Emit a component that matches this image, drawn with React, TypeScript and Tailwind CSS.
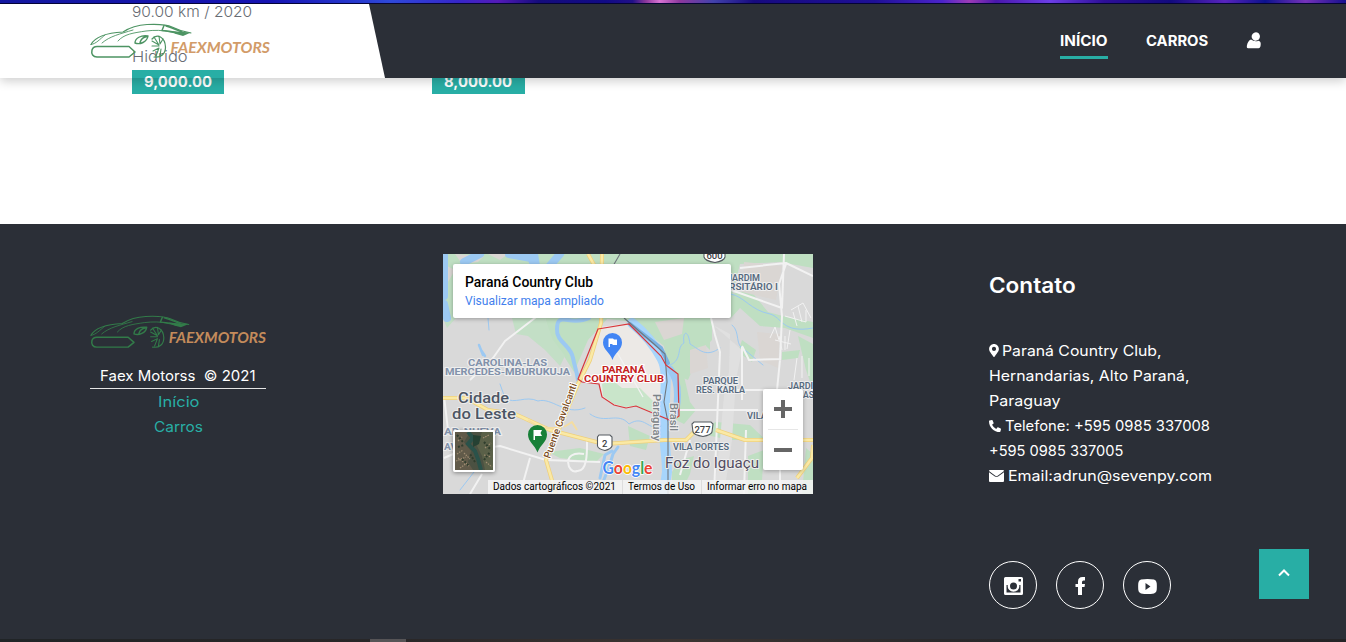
import { useLayoutEffect, useRef, useState } from "react";
import type { ReactNode } from "react";
import { FaMapMarkerAlt, FaPhoneAlt } from "react-icons/fa";

/* Widens or narrows a line of text so that it fills a fixed measure. */
function Fit({ width, className = "", children }: { width: number; className?: string; children: string }) {
  const ref = useRef<HTMLSpanElement>(null);
  const [scale, setScale] = useState(1);
  useLayoutEffect(() => {
    if (ref.current) setScale(width / ref.current.offsetWidth);
  }, [width, children]);
  return (
    <span className={`flex justify-start whitespace-pre ${className}`} style={{ width }}>
      <span ref={ref} className="block shrink-0 origin-left" style={{ transform: `scaleX(${scale})` }}>
        {children}
      </span>
    </span>
  );
}

function Logo({ className, green, orange }: { className: string; green: string; orange: string }) {
  return (
    <svg className={className} viewBox="0 0 180 36" fill="none" stroke={green} strokeLinecap="round" strokeLinejoin="round" preserveAspectRatio="none">
      <path d="M1 21.500C5 14 14 10 33 9C39 5 46 2 57 1.500C68 1 77 1.500 82 4C88 7 94 9 101 10" strokeWidth="1.1" />
      <path d="M1 21.500C6 21 10 16 15 12M12 20C20 13 30 11 43 7M28 18C34 11 43 10 56 8C64 7 73 7 80 9L91 11" strokeWidth=".9" />
      <path d="M74 2.500L72 7.500C78 7.500 83 9 88 10M76 3C82 4.500 86 7 92 9" strokeWidth="1.500" />
      <path d="M80 8L101 9.500L93 13L86 11Z" fill={green} stroke="none" />
      <path d="M7 23.500H39L45 29L39 34H7C3 34 1 31 2 27Q3 23.500 7 23.500Z" strokeWidth="1.5" />
      <path d="M45 20C45 15 51 12 58 13C57 19 50 22 45 20ZM50 19.500C51 16 54 14 57 13.500" strokeWidth="1.4" />
      <path d="M62 16C67 10 75 14 75.500 24C75.500 31 71 35 64 34" strokeWidth="1.2" />
      <path d="M62 18L69 22L64 14M69 13L70 21L73 16M62 23L69 23M63 28L69 25L66 33M71 26L70 33" strokeWidth="1.1" />
      <text x="80.5" y="30" fill={orange} stroke="none" fontFamily="Lato, 'Open Sans', sans-serif" fontSize="15" fontWeight="700" fontStyle="italic" textLength="99.5" lengthAdjust="spacingAndGlyphs">FAEXMOTORS</text>
    </svg>
  );
}

function Label({ x, y, w, size, fill, halo = "#eeeeee", weight = 500, children }: { x: number; y: number; w?: number; size: number; fill: string; halo?: string; weight?: number; children: string }) {
  return (
    <text x={x} y={y} fontSize={size} fontWeight={weight} fill={fill} stroke={halo} strokeWidth="2" paintOrder="stroke" strokeLinejoin="round" textLength={w} lengthAdjust="spacingAndGlyphs">
      {children}
    </text>
  );
}

function MapDrawing() {
  return (
    <svg className="block h-[240px] w-[370px]" viewBox="443 254 370 240" fontFamily="Roboto, sans-serif" fill="none">
      <rect x="443" y="254" width="370" height="240" fill="#d9d9d9" />
      {/* parks and green belts */}
      <g fill="#bfdfc2">
        <path d="M443 254H600L608 318L588 340L574 372L560 350L548 338L545 318H443Z" />
        <path d="M600 318H712V340L700 352L688 380L668 372L664 346L633 322Z" />
        <path d="M600 254H813V268L780 262L740 264L731 300H600Z" />
        <path d="M731 294L750 290L768 312L790 318L813 322V338L785 328L760 326L740 308L731 318L710 318V350L700 340V318Z" />
        <path d="M668 350L690 345L688 362L684 376L690 402L696 410L684 424L676 420V376Z" />
        <path d="M692 432L716 422L750 425L766 440L730 440Z" />
        <path d="M548 452L580 448L604 454L596 462L560 458Z" />
        <path d="M628 426L650 436L646 450L630 446ZM680 460L694 456L690 474L680 494H672V472Z" />
        <path d="M742 340L756 350L752 362L738 352ZM782 352L800 350L798 358L782 360ZM798 336L813 344V390L806 370ZM760 270L772 274L764 288Z" />
        <path d="M748 456L764 450L762 480L756 494H748ZM806 448L813 454V494H802Z" />
      </g>
      <g fill="#dad6d3">
        <path d="M455 254L484 256L478 262L462 264ZM443 264L455 270L448 282L443 280ZM488 254H508L500 260Z" />
        <path d="M655 322L684 318L682 334L664 340ZM690 350L706 345L708 368L690 374ZM744 262L782 266L776 300L742 292Z" />
        <path d="M757 332L780 334L778 368L760 360Z" />
      </g>
      <path d="M443 318H545L552 342L564 360L572 384H443Z" fill="#d9d9d9" />
      <path d="M443 318H456L447 328ZM512 318H545L553 340L565 356L560 366L545 350L528 336L516 334Z" fill="#c3dfc6" />
      <path d="M600 327L632 323L650 346L660 366L664 418L636 406L626 408L614 405L602 397L599 384L582 381L590 360Z" fill="#ece9e6" />
      <path d="M602 384L612 380L622 388L640 388L656 404L658 414L636 406L625 407L614 404L603 396ZM618 369L634 372L630 378L618 378Z" fill="#c9e5ca" />
      <path d="M713 325L730 334L729 372L724 396L720 440L714 494H724L732 440L736 380L742 350Z" fill="#e0e0e0" />
      {/* water */}
      <g stroke="#9cc9f2" strokeLinecap="round" strokeLinejoin="round">
        <path d="M444 254V296M464 262L480 254M447 318L444 304M509 254L531 258L534 264M534 254L536 266M548 268L560 254" strokeWidth="8" />
        <path d="M481 350L485 356M479 345L483 355" strokeWidth="2.5" />
        <path d="M589 318C570 327 557 310 557 329C556 342 571 345 573 358C575 368 577 372 578 380" strokeWidth="4" />
        <path d="M632 323C646 334 655 346 662 359C669 373 664 392 665 410C661 430 667 450 667 472C665 485 664 494 663 500" strokeWidth="10" stroke="#a7d5fc" />
        <path d="M630 324L661 348L668 363" stroke="#79b1e2" strokeWidth="4" />
        <path d="M670 369C681 383 678 408 673 418" strokeWidth="7" />
        <path d="M618 447L613 454L609 467L603 482M612 451L605 455L600 478" strokeWidth="3" />
        <path d="M488 318L489 330M460 490L474 472M500 384L505 398C515 405 525 395 538 401C552 397 565 416 585 408M590 414C605 425 618 411 629 424C645 414 648 432 661 426M731 294C745 297 750 310 770 314C782 317 782 334 813 328M732 325C741 332 734 346 745 350L763 365M670 365C683 360 676 347 684 343C682 332 688 328 690 344C700 350 706 358 720 348" strokeWidth="1" />
      </g>
      {/* minor roads */}
      <g stroke="#f2f2f2" strokeWidth="2" strokeLinejoin="round">
        <path d="M540 314L505 341L493 358L470 380M444 458L458 452L500 446L546 460L600 462M530 458L520 494M482 474L470 494M546 460L556 438L570 394M731 290L782 308L784 254M740 268L786 263L813 276M786 264L779 284L782 316L780 360L775 410M711 318L715 335L720 352L718 400L714 494M742 346L749 360L781 359M742 347V400M690 440L680 475M746 430L744 494M780 440V494M722 390H780M680 410H758M444 396L448 430M584 454C560 450 568 475 577 471C588 472 587 450 587 440" />
        <path d="M791 310L803 303L811 318M785 316L806 322M793 312L797 326M798 306L802 322M806 310V322M775 340L791 344M779 336L782 350M785 336V350M790 330L787 349M797 358L794 380M802 356V378M809 358V376M770 338L775 327L779 340" strokeWidth="1" />
        <path d="M603 342L618 354L626 368L635 383L643 397" strokeWidth="1.3" />
      </g>
      {/* highways */}
      <g strokeLinejoin="round">
        <path d="M443 398H466L488 410L515 414L550 430L604 444L665 440L686 440L694 432M716 430L745 440H813M602 254L601 323L590 360L578 384L546 460L556 494M588 254L598 272M797 478L812 458L813 445" stroke="#efd07c" strokeWidth="4" />
        <path d="M443 398H466L488 410L515 414L550 430L604 444L665 440L686 440L694 432M716 430L745 440H813M602 254L601 323L590 360L578 384L546 460L556 494M588 254L598 272M797 478L812 458L813 445" stroke="#fae9a5" strokeWidth="2.5" />
        <path d="M564 427L572 422L577 430M528 420L540 428L560 428" stroke="#f4dda0" strokeWidth="2" />
      </g>
      {/* border lines */}
      <path d="M620 254L613 266M624 318L654 344L665 354L667 382L664 402L668 422V494" stroke="#70777e" strokeWidth="1.1" />
      <path d="M598 329L629 324L661 356L666 365L678 374L679 416L672 421L636 406L626 408L614 405L602 397L599 384L582 382L578 379Z" stroke="#d8363b" strokeWidth="1.2" />
      {/* place names */}
      <Label x={468} y={366} w={79} size={8.5} fill="#8191aa" weight={700}>CAROLINA-LAS</Label>
      <Label x={445} y={375} w={125} size={8.5} fill="#8191aa" weight={700}>MERCEDES-MBURUKUJA</Label>
      <Label x={444} y={435} w={57} size={8.5} fill="#8191aa" weight={700}>AD-NUEVA</Label>
      <Label x={444} y={450} w={13} size={8.5} fill="#8191aa" weight={700}>AV</Label>
      <Label x={458} y={403} w={51} size={15.5} fill="#4c5564">Cidade</Label>
      <Label x={452} y={419} w={64} size={15.5} fill="#4c5564">do Leste</Label>
      <Label x={665} y={467.5} w={94} size={15} fill="#534c60" weight={450}>Foz do Iguaçu</Label>
      <Label x={602} y={373} w={43} size={9} fill="#c5221f" halo="#fff" weight={700}>PARANÁ</Label>
      <Label x={584} y={382} w={80} size={9} fill="#c5221f" halo="#fff" weight={700}>COUNTRY CLUB</Label>
      <Label x={727} y={281} w={33} size={8.5} fill="#566a7f" weight={600}>JARDIM</Label>
      <Label x={717} y={290} w={61} size={8.5} fill="#566a7f" weight={600}>VERSITÁRIO I</Label>
      <Label x={703} y={384} w={35} size={8.5} fill="#566a7f" weight={600}>PARQUE</Label>
      <Label x={696} y={393} w={49} size={8.5} fill="#566a7f" weight={600}>RES. KARLA</Label>
      <Label x={788} y={389} w={33} size={8.5} fill="#566a7f" weight={600}>JARDIM</Label>
      <Label x={803} y={398} size={8.5} fill="#566a7f" weight={600}>AS</Label>
      <Label x={747} y={419} w={20} size={8.5} fill="#566a7f" weight={600}>VILA</Label>
      <Label x={673} y={450} w={56} size={8.5} fill="#566a7f" weight={600}>VILA PORTES</Label>
      <g transform="translate(550 459) rotate(-70)"><Label x={0} y={0} w={79} size={10} fill="#7b4d22" halo="#fff">Puente Cavalcanti</Label></g>
      <g transform="translate(653 394) rotate(90)"><Label x={0} y={0} w={47} size={10.5} fill="#7d8388">Paraguay</Label></g>
      <g transform="translate(670 403) rotate(90)"><Label x={0} y={0} w={28} size={10.5} fill="#7d8388">Brasil</Label></g>
      {/* road shields */}
      <g fill="#fff" stroke="#555b61" strokeWidth="1.1">
        <path d="M599 435H610L612 437V446Q611 449 605 450.500Q598 449 597.500 446V437Z" />
        <path d="M694 422H711L713 424L712 432Q711 435 703 436.500Q694 435 693 432L692 424Z" />
        <path d="M704 250H725V257Q724 261 715 262.500Q705 261 704 257Z" />
      </g>
      <g fill="#3c4043" fontSize="9.5" fontWeight="500" textAnchor="middle">
        <text x="604.700" y="446.500">2</text><text x="702.500" y="432.500">277</text><text x="714.500" y="258.500">600</text>
      </g>
      {/* pins */}
      <path d="M612.500 360C610 352 603 350 603 342.500A9.500 9.500 0 0 1 622 342.500C622 350 615 352 612.500 360Z" fill="#4285f4" />
      <path d="M608.500 347V338.500H613L614 339.500H617V345H613L612 344H610V347Z" fill="#fff" />
      <path d="M537.500 452.500C535 445 528 442 528 434.500A9.500 9.500 0 0 1 547 434.500C547 442 540 445 537.500 452.500Z" fill="#188038" />
      <path d="M533.500 440V430H542L540.500 433L542 436H535V440Z" fill="#fff" />
      {/* Google wordmark */}
      <text x="602.500" y="474" fontFamily="Lato, sans-serif" fontSize="16.500" fontWeight="700" stroke="#fff" strokeWidth="1.500" paintOrder="stroke" textLength="50" lengthAdjust="spacingAndGlyphs">
        <tspan fill="#4285f4">G</tspan><tspan fill="#ea4335">o</tspan><tspan fill="#fbbc05">o</tspan><tspan fill="#4285f4">g</tspan><tspan fill="#34a853">l</tspan><tspan fill="#ea4335">e</tspan>
      </text>
    </svg>
  );
}

function Satellite() {
  return (
    <svg className="block size-full" viewBox="0 0 38 38" fill="none">
      <rect width="38" height="38" fill="#4b5142" />
      <path d="M0 0H15L9 10L16 19L13 30L18 38H0Z" fill="#615a49" />
      <path d="M27 0H38V38H30L27 24L22 14Z" fill="#5a6048" />
      <path d="M13 0L18 6L13 12L20 19L23 27L26 38" stroke="#2a524a" strokeWidth="4" />
      <path d="M18 3L26 4L24 12L18 15Z" fill="#254133" />
      <path d="M2 22L8 18M1 29L11 25M5 36L12 31M3 9L7 5M30 16L36 11M29 23L36 25M31 30L37 35M28 6L34 3M3 26L14 34M9 21L15 27" stroke="#a08d72" strokeWidth="1.2" strokeDasharray="1.5 1" />
      <path d="M3 15L9 13M7 27L14 34M29 10L36 18M29 28L35 20M2 3L8 10M20 30L15 22" stroke="#303d2d" strokeWidth="2" strokeDasharray="2 1.5" />
    </svg>
  );
}

function MapPanel() {
  return (
    <div className="relative h-[240px] w-[370px] overflow-hidden font-[Roboto,sans-serif]">
      <MapDrawing />
      <div className="absolute left-2.5 top-2.5 flex h-[54px] w-[278px] flex-col rounded-xs bg-white px-3 pt-2 shadow-[0_1px_4px_rgba(0,0,0,0.3)]">
        <Fit width={128.5} className="text-sm leading-5 font-medium text-black">Paraná Country Club</Fit>
        <Fit width={138.5} className="text-xs leading-[18px] text-[#427fed]">Visualizar mapa ampliado</Fit>
      </div>
      <div className="absolute left-2.5 top-[176px] size-[42px] rounded-xs border-2 border-white shadow-[0_1px_4px_rgba(0,0,0,0.4)]">
        <Satellite />
      </div>
      <div className="absolute left-80 top-[135px] flex h-[81px] w-10 flex-col items-center rounded-xs bg-white shadow-[0_1px_4px_rgba(0,0,0,0.3)]">
        <span className="flex h-10 items-center"><svg className="size-[18px]" viewBox="0 0 18 18"><path d="M7 0h4v7h7v4h-7v7H7v-7H0V7h7z" fill="#666" /></svg></span>
        <span className="h-px w-[30px] bg-[#e6e6e6]" />
        <span className="flex h-10 items-center"><span className="h-1 w-[18px] bg-[#666]" /></span>
      </div>
      <div className="absolute bottom-0 right-0 flex h-3.5 w-[325px] items-center bg-[#f5f5f5]/85 text-[10px] text-black">
        <span className="w-[134px] pl-[5px] leading-[14px]"><Fit width={123}>Dados cartográficos ©2021</Fit></span>
        <span className="w-[79px] border-l border-[#ddd] pl-[5px] leading-[14px]"><Fit width={67}>Termos de Uso</Fit></span>
        <span className="border-l border-[#ddd] pl-[5px] leading-[14px]"><Fit width={100}>Informar erro no mapa</Fit></span>
      </div>
    </div>
  );
}

function Header() {
  return (
    <header className="absolute inset-x-0 top-1 flex h-[74px] shadow-[0_3px_10px_rgba(0,0,0,0.2)]">
      <div className="w-[369px] shrink-0 pl-[90px] pt-[19px]">
        <Logo className="h-9 w-[180px]" green="#4d9463" orange="#d29b68" />
      </div>
      <nav className="flex flex-1 items-start bg-[#2b2f37] pl-[691px] pt-[26px] text-sm leading-[22px] font-bold text-white [clip-path:polygon(0_0,100%_0,100%_100%,16px_100%)]">
        <a className="mr-[38px] w-12 border-b-3 border-[#28aea5] pb-1"><Fit width={48}>INÍCIO</Fit></a>
        <a className="mr-[38px] w-[62px]"><Fit width={62.5}>CARROS</Fit></a>
        <svg className="mt-[2px] h-[17px] w-4" viewBox="0 0 16 17">
          <ellipse cx="9.800" cy="4.500" rx="4.100" ry="4.300" fill="#fff" transform="rotate(20 9.800 4.500)" />
          <path d="M5 7.500Q8.500 10.300 12.500 8.800Q15 9.500 14.700 12.500Q14.500 16.300 12.500 16.300H2Q.5 16.300 .8 14Q1.800 8.500 5 7.500Z" fill="#fff" />
        </svg>
      </nav>
    </header>
  );
}

function Price({ children }: { children: string }) {
  return (
    <span className="flex h-6 items-center bg-[#28aea5] px-3 text-sm font-bold text-white">
      <Fit width={68}>{children}</Fit>
    </span>
  );
}

function Social({ children }: { children: ReactNode }) {
  return <a className="flex size-12 items-center justify-center rounded-full border border-white pt-[2px]">{children}</a>;
}

export default function App() {
  return (
    <div className="relative flex h-[642px] w-[1346px] flex-col overflow-hidden bg-white font-[Inter,sans-serif]">
      <div className="h-1 shrink-0 border-b border-[#05043a] bg-[linear-gradient(90deg,#1519a5_0%,#1714b8_20%,#304be0_29%,#3828cf_34%,#571bbd_37%,#160d80_40%,#120b8a_45%,#22118b_47%,#923aa1_48%,#de76d8_49%,#923aa1_50.5%,#4444b0_53%,#180b83_56%,#20119b_65%,#4e25d0_70%,#a13dbb_72%,#4c18b1_74%,#7040ed_78%,#30109c_82%,#130b82_87%,#5b25c2_91%,#0d1391_94%,#7934bf_97%,#171092_100%)]" />
      <main className="flex h-[220px] shrink-0 items-start gap-[180px] pl-[132px]">
        <article className="text-[15px] leading-[22px] font-light text-[#686c73]">
          <p className="-mt-[3px]"><Fit width={120}>90.00 km / 2020</Fit></p>
          <p className="mt-[23px]"><Fit width={56}>Hidrido</Fit></p>
          <div className="mt-0.5 w-[92px]"><Price>9,000.00</Price></div>
        </article>
        <div className="w-[93px] pt-[66px]"><Price>8,000.00</Price></div>
      </main>
      <footer className="flex flex-1 items-start bg-[#2b2f37] text-[14.5px] leading-[25px] text-white">
        <section className="ml-[90px] flex w-[176px] flex-col items-center pt-[91px]">
          <Logo className="h-[34px] w-full" green="#327b49" orange="#c38b5b" />
          <p className="mt-[14px] flex h-[26px] w-full justify-center border-b border-[#e5e5e5]"><Fit width={156}>{"Faex Motorss  © 2021"}</Fit></p>
          <Fit width={41} className="text-[#28aea5]">Início</Fit>
          <Fit width={49} className="text-[#28aea5]">Carros</Fit>
        </section>
        <section className="ml-[177px] pt-[30px]"><MapPanel /></section>
        <section className="ml-44 w-[250px] pt-[47px]">
          <h2 className="h-[30px] text-[21px] leading-[30px] font-semibold"><Fit width={87}>Contato</Fit></h2>
          <address className="mt-[37px] flex flex-col items-start not-italic">
            <span className="flex items-center"><FaMapMarkerAlt className="mr-[3px] h-[13px] w-[10px]" /><Fit width={160}>Paraná Country Club,</Fit></span>
            <Fit width={200}>Hernandarias, Alto Paraná,</Fit>
            <Fit width={72}>Paraguay</Fit>
            <span className="flex items-center"><FaPhoneAlt className="mr-1 size-[12px]" /><Fit width={205}>Telefone: +595 0985 337008</Fit></span>
            <Fit width={134}>+595 0985 337005</Fit>
            <span className="flex items-center">
              <svg className="mr-1 h-3 w-[15px]" viewBox="0 0 15 12" fill="#fff"><path d="M1 0H14Q15 0 15 1L9 5.500Q7.500 6.600 6 5.500L0 1Q0 0 1 0ZM0 2.200L5.500 6.200Q7.500 7.500 9.500 6.200L15 2.200V11Q15 12 14 12H1Q0 12 0 11Z" /></svg>
              <Fit width={204}>Email:adrun@sevenpy.com</Fit>
            </span>
          </address>
          <div className="mt-[73px] flex gap-[19px]">
            <Social><svg className="h-[18px] w-[19px]" viewBox="0 0 19 18"><path fillRule="evenodd" d="M1.500 0H17.500Q19 0 19 1.500V16.500Q19 18 17.500 18H1.500Q0 18 0 16.500V1.500Q0 0 1.500 0ZM14.500 2V4.500H17V2ZM2.500 8V15.500H16.500V8H15.200A5.800 5.800 0 1 1 3.800 8ZM9.500 5.500A3.500 3.500 0 1 0 9.500 12.500A3.500 3.500 0 1 0 9.500 5.500Z" fill="#fff" /></svg></Social>
            <Social><svg className="h-[18px] w-[11px]" viewBox="0 0 11 18"><path d="M10 0V3.500H8.500Q7 3.500 7 5V7H10L9.500 10H7V18H3V10H.5V7H3V4.500Q3 0 7.500 0Z" fill="#fff" /></svg></Social>
            <Social><svg className="h-[15px] w-[19px]" viewBox="0 0 19 15"><path fillRule="evenodd" d="M3 .5Q9.500-.5 16 .5Q18.500 1 18.700 4Q19 7.500 18.700 11Q18.500 14 16 14.500Q9.500 15.500 3 14.500Q.5 14 .3 11Q0 7.500.3 4Q.5 1 3 .5ZM7.500 4V11L12.500 7.500Z" fill="#fff" /></svg></Social>
          </div>
        </section>
      </footer>
      <div className="flex h-[3px] shrink-0 bg-[linear-gradient(90deg,#202426,#292728_30%,#3b3431_50%,#29292b_70%,#242426)] pl-[370px]"><span className="w-9 bg-[#565456]" /></div>
      <Header />
      <button className="absolute left-[1259px] top-[549px] flex size-[50px] items-center justify-center bg-[#28aea5]">
        <svg className="mb-0.5 h-2 w-3" viewBox="0 0 12 8"><path d="M1 6.500L6 1.500L11 6.500" fill="none" stroke="#fff" strokeWidth="2" /></svg>
      </button>
    </div>
  );
}
